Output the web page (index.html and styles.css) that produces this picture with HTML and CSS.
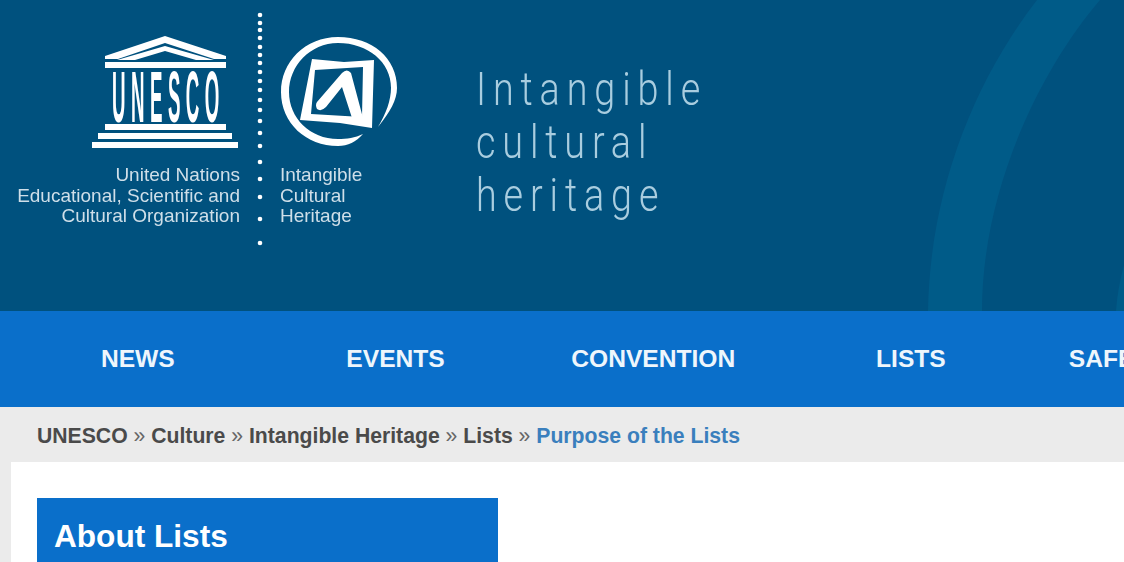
FILE: index.html
```html
<!DOCTYPE html>
<html lang="en">
<head>
  <meta charset="UTF-8">
  <meta name="viewport" content="width=device-width, initial-scale=1.0">
  <title>Purpose of the Lists</title>
  <link rel="stylesheet" href="styles.css">
</head>
<body>
  <header class="header">
    <svg class="header-arcs" viewBox="0 0 1124 311" aria-hidden="true">
      <path d="M1037 0H1100C1040 70 982 190 982 311H928C930 190 975 80 1037 0Z"></path>
      <path d="M1116 311C1117 295 1120 280 1124 265V311Z"></path>
    </svg>

    <div class="logo-unesco">
      <svg class="temple" viewBox="92 36 147 112" aria-hidden="true">
        <path d="M105 56L165 36L226 56V59H214L165 43L118 59H105Z"></path>
        <path d="M117 60L165 46L214 60H196L165 51L135 60Z"></path>
        <rect x="105" y="62" width="121" height="6"></rect>
        <text class="temple-letters" transform="translate(112 122) scale(.26 1)">UNESCO</text>
        <rect x="105" y="124" width="121" height="6"></rect>
        <rect x="98" y="133" width="134" height="6"></rect>
        <rect x="92" y="142" width="146" height="6"></rect>
      </svg>
      <p class="logo-caption">United Nations<br>Educational, Scientific and<br>Cultural Organization</p>
    </div>

    <svg class="logo-dots" viewBox="255 0 10 250" aria-hidden="true">
      <circle cx="260" cy="15" r="2.3"></circle>
      <circle cx="260" cy="23" r="2.3"></circle>
      <circle cx="260" cy="30" r="2.3"></circle>
      <circle cx="260" cy="38" r="2.3"></circle>
      <circle cx="260" cy="47" r="2.3"></circle>
      <circle cx="260" cy="55" r="2.3"></circle>
      <circle cx="260" cy="63" r="2.3"></circle>
      <circle cx="260" cy="72" r="2.3"></circle>
      <circle cx="260" cy="81" r="2.3"></circle>
      <circle cx="260" cy="90" r="2.3"></circle>
      <circle cx="260" cy="100" r="2.3"></circle>
      <circle cx="260" cy="110" r="2.3"></circle>
      <circle cx="260" cy="121" r="2.3"></circle>
      <circle cx="260" cy="133" r="2.3"></circle>
      <circle cx="260" cy="146" r="2.3"></circle>
      <circle cx="260" cy="162" r="2.3"></circle>
      <circle cx="260" cy="179" r="2.3"></circle>
      <circle cx="260" cy="197" r="2.3"></circle>
      <circle cx="260" cy="219" r="2.3"></circle>
      <circle cx="260" cy="243" r="2.3"></circle>
    </svg>

    <div class="logo-ich">
      <svg class="emblem" viewBox="280 36 118 112" aria-hidden="true">
        <path d="M378 127C390 112 397 100 397 88C397 58 372 37 338 37C305 37 281 62 281 92C281 123 306 146 338 146C348 146 356 142 363 134C355 138 347 139 338 139C310 139 289 118 289 92C289 66 310 43 338 43C368 43 391 62 391 88C391 100 386 114 378 127Z"></path>
        <path fill-rule="evenodd" d="M312 59L344 62L374 60L372 128L340 123L300 120ZM315 70L363 67L362 117L311 114Z"></path>
        <path d="M317 102L342 73Q347 68 351 73L363 118H352L342 87L326 107Q321 112 317 109Q315 105 317 102Z"></path>
      </svg>
      <p class="logo-caption logo-caption-left">Intangible<br>Cultural<br>Heritage</p>
    </div>

    <div class="site-title">Intangible<br>cultural<br>heritage</div>
  </header>

  <nav class="nav">
    <a class="nav-item" href="#">NEWS</a>
    <a class="nav-item" href="#">EVENTS</a>
    <a class="nav-item" href="#">CONVENTION</a>
    <a class="nav-item" href="#">LISTS</a>
    <a class="nav-item" href="#">SAFEGUARDING</a>
  </nav>

  <div class="breadcrumb">
    <a href="#">UNESCO</a> <span class="sep">»</span>
    <a href="#">Culture</a> <span class="sep">»</span>
    <a href="#">Intangible Heritage</a> <span class="sep">»</span>
    <a href="#">Lists</a> <span class="sep">»</span>
    <a class="current" href="#">Purpose of the Lists</a>
  </div>

  <main class="content">
    <aside class="sidebar">
      <h2 class="sidebar-title">About Lists</h2>
    </aside>
  </main>
</body>
</html>
```

FILE: styles.css
```css
html, body {
  height: 100%;
}
body {
  margin: 0;
  overflow: hidden;
  background-color: #ebebeb;
  font-family: "Liberation Sans", Arial, sans-serif;
}
a {
  text-decoration: none;
  color: inherit;
}

.header {
  position: relative;
  display: flex;
  height: 311px;
  padding-left: 17px;
  overflow: hidden;
  background-color: #00517e;
}
.header-arcs {
  position: absolute;
  top: 0;
  left: 0;
  width: 1124px;
  height: 311px;
  fill: #005b88;
}

.logo-unesco {
  position: relative;
  display: flex;
  flex-direction: column;
  align-items: flex-end;
  width: 223px;
  padding-top: 36px;
}
.temple {
  width: 147px;
  height: 112px;
  margin-right: 1px;
  fill: #fff;
  filter: blur(.4px);
}
.temple-letters {
  font-size: 72px;
  font-weight: bold;
  letter-spacing: 21px;
}
.logo-caption {
  margin: 17px 0 0;
  font-size: 19px;
  line-height: 20.5px;
  text-align: right;
  white-space: nowrap;
  color: #cfdfe9;
  filter: blur(.3px);
}
.logo-caption-left {
  text-align: left;
}

.logo-dots {
  position: relative;
  width: 10px;
  height: 250px;
  margin-left: 15px;
  fill: #fff;
}

.logo-ich {
  position: relative;
  width: 196px;
  margin-left: 15px;
  padding-top: 36px;
}
.emblem {
  display: block;
  width: 118px;
  height: 112px;
  fill: #fff;
  filter: blur(.4px);
}

.site-title {
  position: relative;
  padding-top: 63px;
  font-family: Roboto, "Liberation Sans", sans-serif;
  font-size: 46px;
  font-weight: 300;
  line-height: 53px;
  letter-spacing: 8.4px;
  white-space: nowrap;
  color: #a9cddf;
  transform: scaleX(.82);
  transform-origin: left top;
}

.nav {
  display: flex;
  height: 96px;
  padding-left: 9px;
  overflow: hidden;
  background-color: #0a6fca;
}
.nav-item {
  flex: 0 0 257.7px;
  font-size: 24.6px;
  font-weight: bold;
  line-height: 96px;
  text-align: center;
  white-space: nowrap;
  color: #eef6fc;
}

.breadcrumb {
  height: 55px;
  padding-left: 37px;
  font-size: 21.2px;
  font-weight: bold;
  line-height: 58px;
  white-space: nowrap;
  color: #4a4a4a;
}
.sep {
  font-weight: normal;
  color: #666;
}
.current {
  color: #3a7fbd;
}

.content {
  height: 64px;
  margin-left: 11px;
  padding: 36px 0 0 26px;
  background-color: #fff;
}
.sidebar {
  width: 461px;
}
.sidebar-title {
  height: 64px;
  margin: 0;
  padding-left: 17px;
  font-size: 31.6px;
  line-height: 76px;
  color: #fff;
  background-color: #0a6fca;
}
```
